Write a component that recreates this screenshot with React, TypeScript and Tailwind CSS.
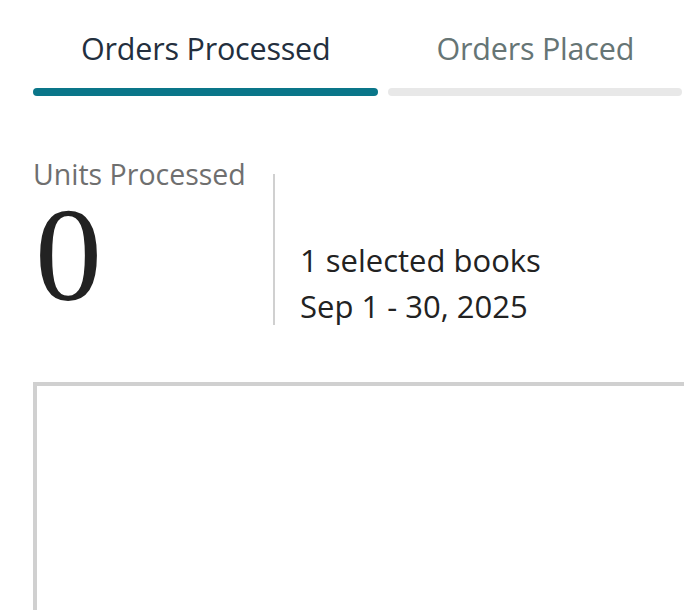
export default function App() {
  const tabs = [
    { label: 'Orders Processed', active: true },
    { label: 'Orders Placed', active: false },
  ];

  return (
    <div className="w-[684px] h-[610px] overflow-hidden bg-white font-['Open_Sans',sans-serif]">
      {/* tabs */}
      <div className="flex gap-2.5 pl-[33px] pt-[26px]">
        {tabs.map((t) => (
          <div key={t.label} className="flex flex-col shrink-0">
            <div
              className={
                'px-12 text-[30.5px] leading-[44px] tracking-[-0.2px] whitespace-nowrap ' +
                (t.active ? 'text-[#232f3e]' : 'text-[#667575]')
              }
            >
              {t.label}
            </div>
            <div
              className={
                'mt-[18px] h-2 rounded-full ' + (t.active ? 'bg-[#0a7689]' : 'bg-[#e8e8e8]')
              }
            />
          </div>
        ))}
      </div>

      {/* stats */}
      <div className="flex pl-[33px] mt-[62px]">
        <div className="w-[240px] shrink-0">
          <div className="-mt-[2px] text-[28.5px] leading-[36px] text-[#6f6f6f]">Units Processed</div>
          <div className="font-['Liberation_Serif',serif] text-[134px] leading-[120px] text-[#222] ml-[2px] mt-[3px]">
            0
          </div>
        </div>
        <div className="mt-[16px] h-[151px] border-l-2 border-[#d0d0d0] pl-[25px] flex flex-col justify-end">
          <div className="-mb-[4px] text-[31px] leading-[46px] text-[#222]">
            <div>1 selected books</div>
            <div>Sep 1 - 30, 2025</div>
          </div>
        </div>
      </div>

      {/* chart box */}
      <div className="ml-[33px] mt-[57px] h-[260px] border-t-4 border-l-4 border-[#d0d0d0]" />
    </div>
  );
}
